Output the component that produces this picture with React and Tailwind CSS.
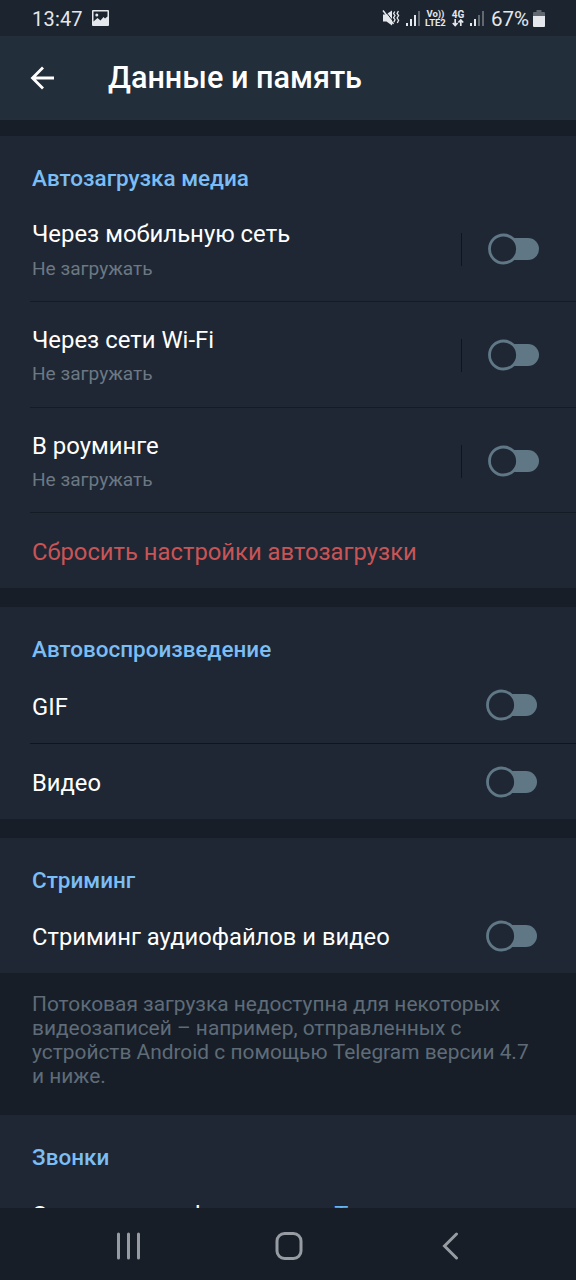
function StatusBar() {
    return (
        <div className="h-9 shrink-0 bg-[#1c242f] flex items-center pl-8 pr-[31px] text-[#e4e8ec]">
            <span className="text-[20px] leading-9 tracking-[0.2px] pt-px">13:47</span>
            <svg className="ml-[9px]" width="17" height="16" viewBox="0 0 17 16">
                <path d="M1 0h15a1 1 0 0 1 1 1v14a1 1 0 0 1-1 1H1a1 1 0 0 1-1-1V1a1 1 0 0 1 1-1zM1.500 1.500v10l4-3.500 3 2.500 3-3.500 1.500 1.500 2.500-2V1.500z" fill="currentColor" fillRule="evenodd" />
                <circle cx="4.8" cy="5" r="1.500" fill="currentColor" />
            </svg>
            <div className="ml-auto flex items-center">
                <svg width="18" height="18" viewBox="0 0 18 18" fill="none" stroke="currentColor">
                    <path d="M1 5.500h3L10 1.500v15L4.500 12.500H1z" fill="currentColor" stroke="none" />
                    <path d="M1 1.500l10.500 13.500" strokeWidth="1.500" />
                    <path d="M2.800 1.500l9 11.500" stroke="#1c242f" strokeWidth="1" />
                    <path d="M12.800 2.500l-1.200 2 1.400 2-1.400 2.200 1.400 2-1.200 2.500M16.400 2l-1.300 2.500 1.500 2-1.500 2.500 1.500 2.200-1.300 2.800" strokeWidth="1.300" />
                </svg>
                <Signal className="ml-[6px]" bars={3} />
                <div className="ml-[3px] w-[23px] flex flex-col items-center text-[9.500px] leading-[9px] font-bold">
                    <span>Vo))</span>
                    <span>LTE2</span>
                </div>
                <div className="ml-[4px] w-[14px] flex flex-col items-center text-[10px] leading-[9px] font-bold">
                    <span>4G</span>
                    <svg width="12" height="8" viewBox="0 0 12 8" fill="none" stroke="currentColor" strokeWidth="1.700">
                        <path d="M3.200 0v6M.8 4l2.400 2.500 2.400-2.500M8.800 7V1M6.400 3.500L8.800 1l2.400 2.500" />
                    </svg>
                </div>
                <Signal className="ml-[5px]" bars={2} />
                <span className="ml-[6px] pt-px text-[20.500px] leading-9">67%</span>
                <svg className="ml-[4px]" width="12" height="17" viewBox="0 0 12 17" fill="currentColor">
                    <path d="M3.500 0h5v2H11a1 1 0 0 1 1 1v3H0V3a1 1 0 0 1 1-1h2.500z" opacity="0.35" />
                    <path d="M0 6h12v10a1 1 0 0 1-1 1H1a1 1 0 0 1-1-1z" />
                </svg>
            </div>
        </div>
    );
}

function Signal({ bars, className }) {
    return (
        <svg className={className} width="15" height="16" viewBox="0 0 15 16" fill="currentColor">
            {[3, 7, 11, 15].map((h, i) => (
                <rect key={h} x={i * 4} y={16 - h} width="2" height={h} opacity={i < bars ? 1 : 0.35} />
            ))}
        </svg>
    );
}

function Toggle({ className = "" }) {
    return (
        <svg className={className} width="52" height="32" viewBox="0 0 52 32">
            <rect x="10" y="5" width="41" height="22" rx="11" fill="#607786" />
            <circle cx="15.500" cy="16" r="14" fill="#1e2733" stroke="#607786" strokeWidth="2.800" />
        </svg>
    );
}

function SectionTitle({ children }) {
    return <h2 className="pl-8 pt-[28px] h-[60px] text-[22.470px] leading-7 font-medium text-[#7bbdf5]">{children}</h2>;
}

function MediaRow({ title }) {
    return (
        <div className="flex h-[105.800px]">
            <div className="ml-[30px] flex-1 flex border-b border-[#131b25]">
                <div className="pl-[2px] pt-[24px] flex-1">
                    <p className="text-[23.900px] leading-7 text-white">{title}</p>
                    <p className="mt-[8.500px] text-[19.100px] leading-6 text-[#6c7883]">{"Не загружать"}</p>
                </div>
                <div className="mt-[37px] w-px h-[33px] bg-[#0d151e]" />
                <Toggle className="mt-[37px] ml-[26px] mr-[36px]" />
            </div>
        </div>
    );
}

function ToggleRow({ title, divider }) {
    return (
        <div className={`ml-[30px] pl-[2px] pr-[38px] flex items-center justify-between ${divider ? "h-[77px] border-b border-[#0e151e]" : "h-[75px]"}`}>
            <p className={`text-[23.750px] leading-7 text-white ${divider ? "pt-[3px]" : "pt-[2px]"}`}>{title}</p>
            <Toggle />
        </div>
    );
}

export default function App() {
    const mediaRows = ["Через мобильную сеть", "Через сети Wi-Fi", "В роуминге"];

    return (
        <div className="w-[576px] h-[1280px] overflow-hidden flex flex-col bg-[#171e28] font-['Roboto',sans-serif]">
            <StatusBar />
            <header className="h-[84px] shrink-0 bg-[#232e3b] flex items-center pl-[30px] text-white">
                <svg width="25" height="24" viewBox="0 0 25 24" fill="none" stroke="currentColor" strokeWidth="2.800">
                    <path d="M13 1.500L2.500 12l10.500 10.500M2 12h22" />
                </svg>
                <h1 className="ml-[53px] text-[30.600px] leading-9 font-medium">Данные и память</h1>
            </header>

            <section className="mt-4 h-[452px] shrink-0 bg-[#1e2733]">
                <SectionTitle>Автозагрузка медиа</SectionTitle>
                <div>
                    {mediaRows.map((title) => (
                        <MediaRow key={title} title={title} />
                    ))}
                </div>
                <p className="pl-8 pt-[24.500px] text-[23.800px] leading-7 text-[#c95456]">Сбросить настройки автозагрузки</p>
            </section>

            <section className="mt-[19px] h-[212px] shrink-0 bg-[#1e2733]">
                <SectionTitle>Автовоспроизведение</SectionTitle>
                <ToggleRow title="GIF" divider />
                <ToggleRow title="Видео" />
            </section>

            <section className="mt-[19px] h-[135px] shrink-0 bg-[#1e2733]">
                <SectionTitle>Стриминг</SectionTitle>
                <ToggleRow title="Стриминг аудиофайлов и видео" />
            </section>

            <p className="h-[142px] shrink-0 pl-8 pt-[19px] text-[20.900px] leading-[24px] text-[#5f6c78]">
                Потоковая загрузка недоступна для некоторых<br />
                видеозаписей – например, отправленных с<br />
                устройств Android с помощью Telegram версии 4.7<br />
                и ниже.
            </p>

            <section className="h-[93px] shrink-0 overflow-hidden bg-[#1e2733]">
                <SectionTitle>Звонки</SectionTitle>
                <div className="pl-8 pr-8 pt-[26px] flex justify-between text-[23.750px] leading-7">
                    <span className="text-white">Экономия трафика</span>
                    <span className="text-[#64b5ef]">Только в роуминге</span>
                </div>
            </section>

            <nav className="h-[72px] shrink-0 bg-[#171e27] flex items-center pt-1 text-[#979ca2]">
                <svg className="ml-[116px]" width="25" height="28" viewBox="0 0 25 28" stroke="currentColor" strokeWidth="3" strokeLinecap="round">
                    <path d="M2.500 2v24M12.500 2v24M22.500 2v24" />
                </svg>
                <svg className="ml-[134px]" width="28" height="30" viewBox="0 0 28 30" fill="none" stroke="currentColor" strokeWidth="3">
                    <rect x="2" y="2.500" width="24" height="25" rx="7.500" />
                </svg>
                <svg className="ml-[139px]" width="17" height="28" viewBox="0 0 17 28" fill="none" stroke="currentColor" strokeWidth="3" strokeLinecap="round">
                    <path d="M14.500 2L2.500 14l12 12" />
                </svg>
            </nav>
        </div>
    );
}
